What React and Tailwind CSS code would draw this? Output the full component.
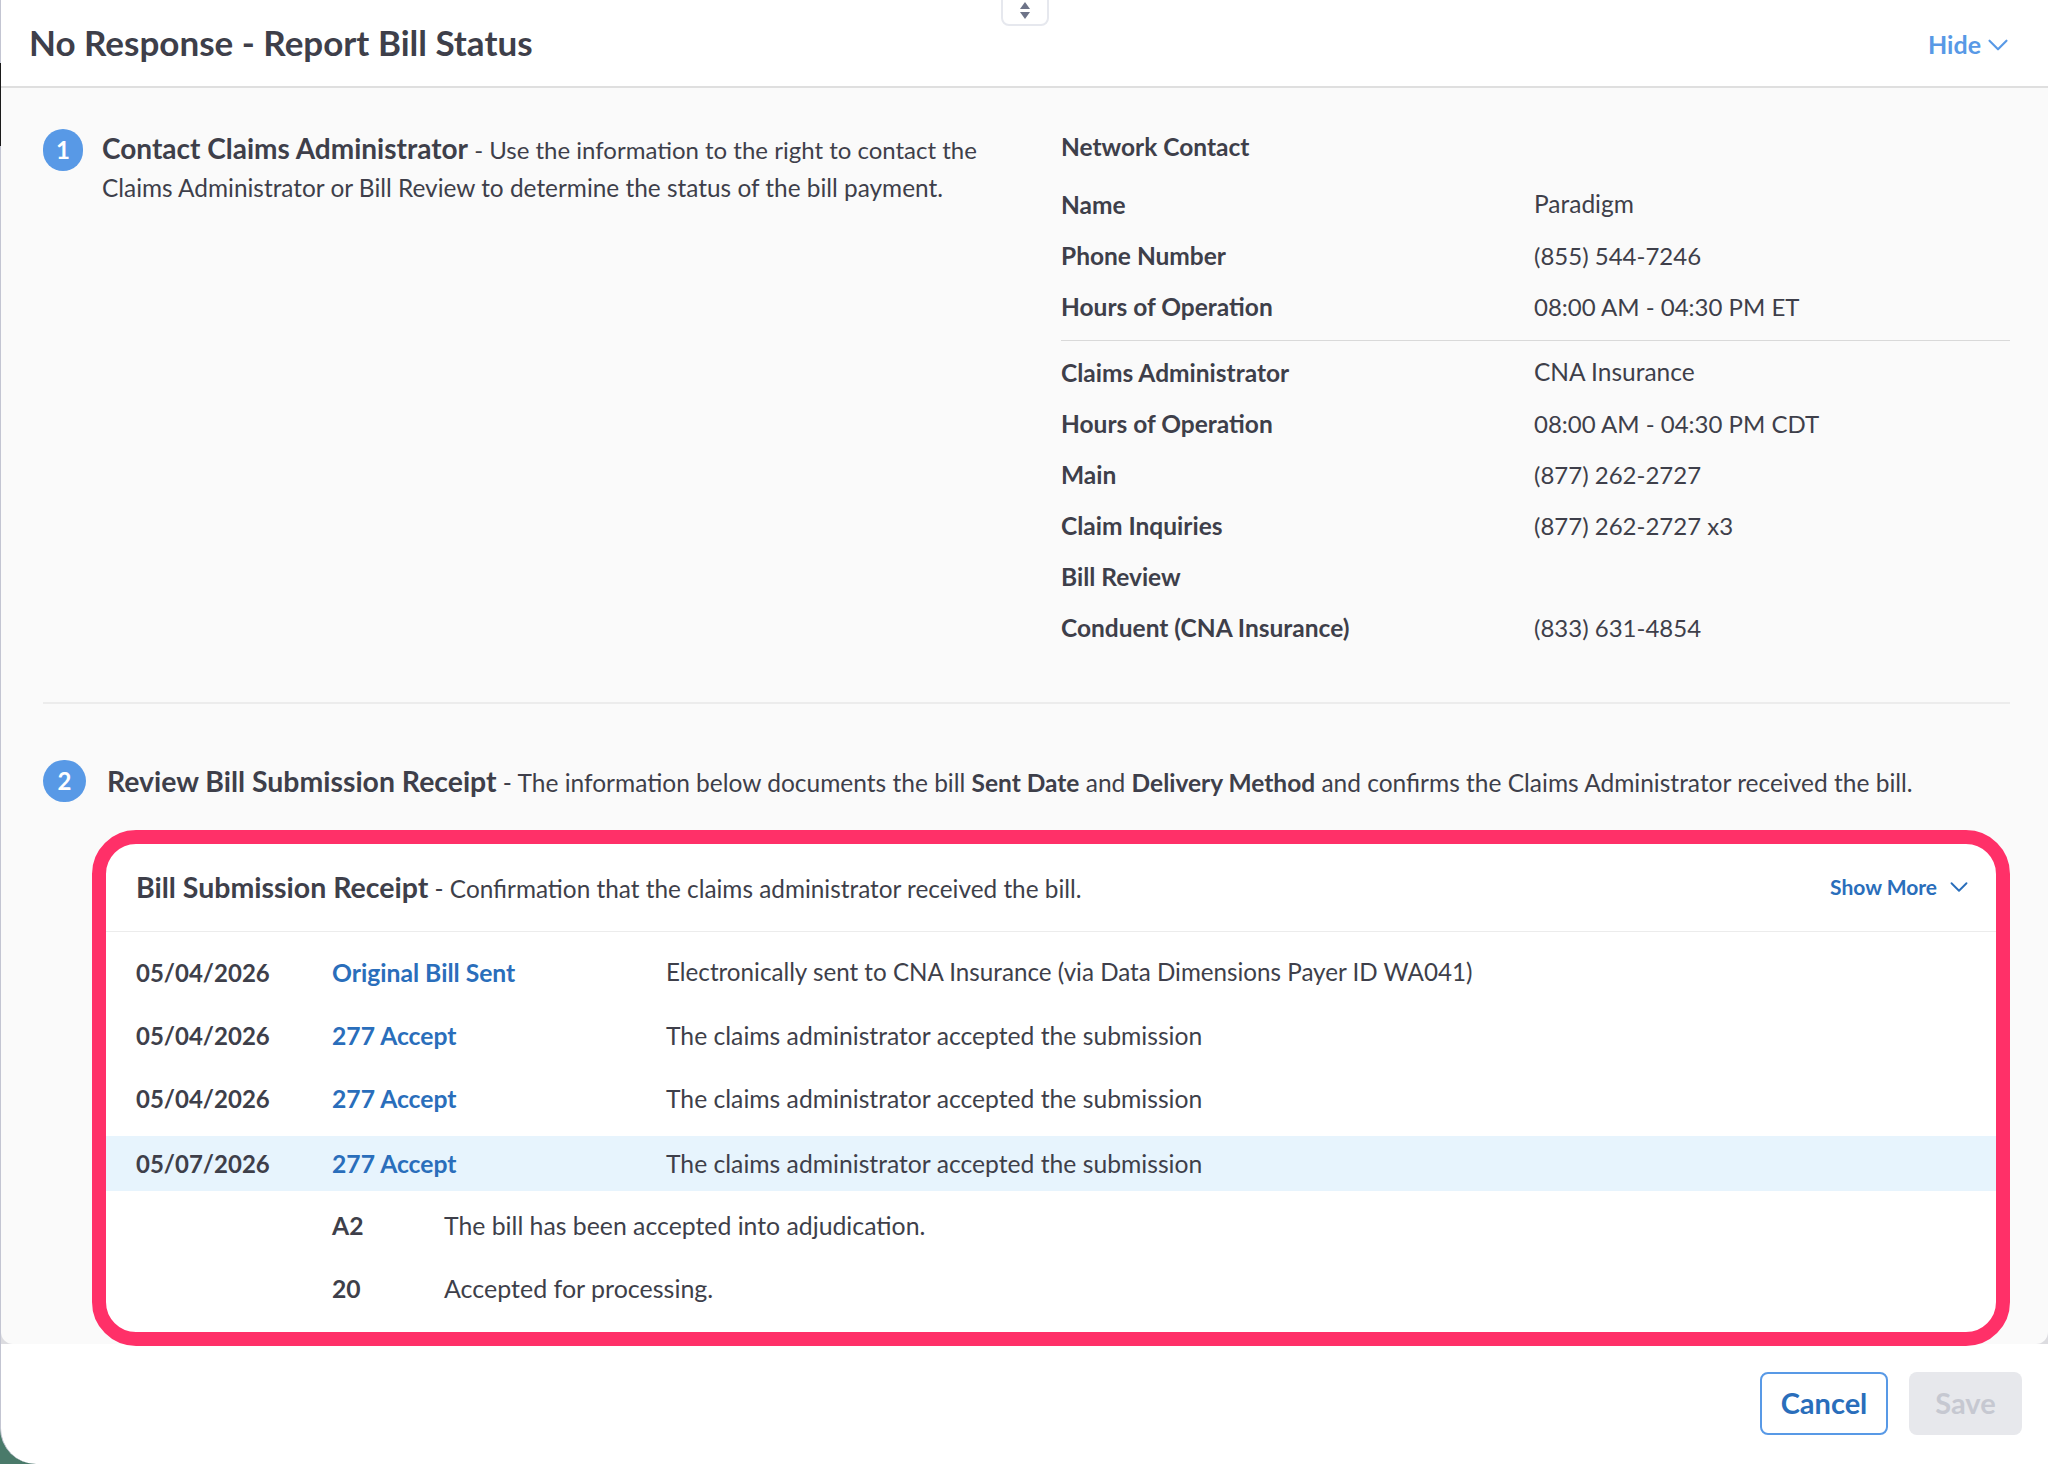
import React from 'react';
import { ChevronDown } from 'lucide-react';

const networkRows = [
  ['Name', 'Paradigm'],
  ['Phone Number', '(855) 544-7246'],
  ['Hours of Operation', '08:00 AM - 04:30 PM ET'],
];

const adminRows = [
  ['Claims Administrator', 'CNA Insurance'],
  ['Hours of Operation', '08:00 AM - 04:30 PM CDT'],
  ['Main', '(877) 262-2727'],
  ['Claim Inquiries', '(877) 262-2727 x3'],
  ['Bill Review', ''],
  ['Conduent (CNA Insurance)', '(833) 631-4854'],
];

const receiptRows = [
  ['05/04/2026', 'Original Bill Sent', 'Electronically sent to CNA Insurance (via Data Dimensions Payer ID WA041)', 'text-[24.2px] pt-[1px]'],
  ['05/04/2026', '277 Accept', 'The claims administrator accepted the submission', 'text-[24.7px]'],
  ['05/04/2026', '277 Accept', 'The claims administrator accepted the submission', 'text-[24.7px]'],
];

const StepBadge = ({ n, className }) => (
  <div className={`h-[42px] shrink-0 rounded-full bg-[#5899e6] text-white text-2xl font-bold flex items-center justify-center ${className}`}>
    {n}
  </div>
);

const ContactRow = ({ label, value }) => (
  <div className="flex h-[51px] items-center">
    <div className="w-[473px] pt-[1px] font-bold text-[24.5px]">{label}</div>
    <div className={/\d/.test(value) ? 'text-[24px]' : 'text-[24.5px]'}>{value}</div>
  </div>
);

const ReceiptRow = ({ date, type, text, size, active }) => (
  <div className={`flex items-center pl-[30px] ${active ? 'h-[55px] mt-[6px] bg-[#e7f4fd]' : 'h-[63px]'}`}>
    <div className="w-[196px] pt-[2px] font-bold">{date}</div>
    <div className="w-[334px] font-bold text-[#2a6ebb] text-[24.7px]">{type}</div>
    <div className={size}>{text}</div>
  </div>
);

export default function App() {
  return (
    <div className="w-[2048px] h-[1464px] bg-[#4a7a6a] overflow-hidden text-[#3e3f4a] text-[24px] font-['Lato','Liberation_Sans',sans-serif]">
      <div className="relative w-full h-full bg-white rounded-bl-[36px] border-l border-[#c3c5d2]">
        <div className="absolute -left-px top-[63px] w-px h-[83px] bg-[#1a1a1a]" />

        {/* drag handle */}
        <div className="absolute left-[1000px] -top-[10px] w-[48px] h-[36px] bg-white border-2 border-[#e6e8ee] rounded-lg flex flex-col items-center justify-end pb-[5px] gap-[3px]">
          <div className="w-0 h-0 border-x-[5px] border-x-transparent border-b-[7px] border-b-[#6d7388]" />
          <div className="w-0 h-0 border-x-[5px] border-x-transparent border-t-[7px] border-t-[#6d7388]" />
        </div>

        <div className="h-[88px] flex items-center justify-between pl-[28px] pr-[33px] border-b-2 border-[#dfdfdf]">
          <h1 className="text-[35px] font-bold -mt-[2px]">No Response - Report Bill Status</h1>
          <div className="flex items-center text-[#5899e6] font-bold text-[25px] pt-[4px]">
            Hide
            <ChevronDown className="w-[34px] h-[34px]" strokeWidth={1.5} />
          </div>
        </div>

        <div className="h-[1256px] bg-[#dcdce0]">
          <div className="h-full bg-[#fafafa] pl-[42px] pr-[38px] rounded-b-xl">
            {/* step 1 */}
            <div className="flex h-[616px] pt-[36px] border-b-2 border-[#ececec]">
              <div className="flex w-[1018px] items-start pt-[5px]">
                <StepBadge n={1} className="w-[40px]" />
                <p className="ml-[19px] w-[900px] leading-[38px]">
                  <span className="font-bold text-[28px]">Contact Claims Administrator</span> - Use the information to the right to contact the
                  <br />
                  <span className="text-[24.4px]">Claims Administrator or Bill Review to determine the status of the bill payment.</span>
                </p>
              </div>
              <div className="flex-1 -mt-[3px]">
                <div className="h-[52px] font-bold text-[24.5px] flex items-center">Network Contact</div>
                <div className="mt-[6px] pb-[8px] border-b border-[#d9d9d9]">
                  {networkRows.map(([label, value]) => (
                    <ContactRow key={label} label={label} value={value} />
                  ))}
                </div>
                <div className="mt-[6px]">
                  {adminRows.map(([label, value]) => (
                    <ContactRow key={label} label={label} value={value} />
                  ))}
                </div>
              </div>
            </div>

            {/* step 2 */}
            <div className="flex items-center mt-[56px]">
              <StepBadge n={2} className="w-[43px]" />
              <p className="ml-[21px] whitespace-nowrap text-[24.5px]">
                <span className="font-bold text-[28.4px]">Review Bill Submission Receipt</span> - The information below documents the bill <b>Sent Date</b> and <b>Delivery Method</b> and confirms the Claims Administrator received the bill.
              </p>
            </div>

            <div className="relative z-10 ml-[49px] mt-[27px] h-[516px] bg-white border-[14px] border-[#ff3068] rounded-[44px] overflow-hidden">
              <div className="h-[88px] flex items-center justify-between pl-[30px] pr-[22px] border-b border-[#ececec]">
                <p className="text-[24.35px]">
                  <span className="font-bold text-[28.5px]">Bill Submission Receipt</span> - Confirmation that the claims administrator received the bill.
                </p>
                <div className="flex items-center gap-[7px] text-[#2a6ebb] font-bold text-[21px]">
                  Show More
                  <ChevronDown className="w-[30px] h-[30px]" strokeWidth={1.5} />
                </div>
              </div>
              <div className="pt-[9px]">
                {receiptRows.map(([date, type, text, size], i) => (
                  <ReceiptRow key={i} date={date} type={type} text={text} size={size} />
                ))}
                <ReceiptRow date="05/07/2026" type="277 Accept" text="The claims administrator accepted the submission" size="text-[24.7px]" active />
                <div className="flex items-center h-[70px] pl-[226px]">
                  <div className="w-[112px] font-bold text-[24.7px]">A2</div>
                  <div className="text-[24.8px]">The bill has been accepted into adjudication.</div>
                </div>
                <div className="flex items-center h-[56px] pl-[226px]">
                  <div className="w-[112px] font-bold text-[24.7px]">20</div>
                  <div className="text-[25px]">Accepted for processing.</div>
                </div>
              </div>
            </div>
          </div>
        </div>

        {/* footer */}
        <div className="h-[120px] flex justify-end items-start pt-[28px] pr-[26px] gap-[21px]">
          <button className="w-[128px] h-[63px] rounded-lg border-2 border-[#5899e6] text-[#2a6ebb] font-bold text-[29px] leading-none pb-[2px]">Cancel</button>
          <button className="w-[113px] h-[63px] rounded-lg bg-[#e7e8ec] text-[#c6c8d1] font-bold text-[29px] leading-none pb-[2px]">Save</button>
        </div>
      </div>
    </div>
  );
}
